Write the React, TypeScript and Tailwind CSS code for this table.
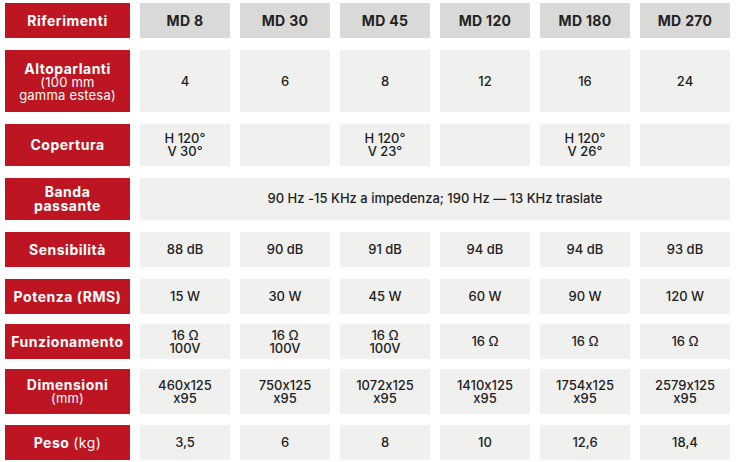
import React from "react";

const RED = "bg-[#bd1622]";

function Label({ children }: { children: React.ReactNode }) {
  return (
    <div className={`${RED} w-[125px] shrink-0 flex flex-col items-center justify-center text-white text-center font-bold text-[14px] leading-[14px] tracking-[0.5px]`}>
      {children}
    </div>
  );
}

function Cell({ children, header }: { children?: React.ReactNode; header?: boolean }) {
  return (
    <div
      className={`w-[90px] shrink-0 flex flex-col items-center justify-center text-center text-[#222] ${
        header ? "bg-[#d9d9d8] font-bold text-[14px] tracking-[0.3px]" : "bg-[#f0f0ef] font-medium text-[13px] leading-[13px]"
      }`}
    >
      {children}
    </div>
  );
}

function Row({ h, mt, children }: { h: string; mt: string; children: React.ReactNode }) {
  return <div className={`flex gap-[10px] ${h} ${mt}`}>{children}</div>;
}

const two = (a: string, b: string) => (
  <>
    <span>{a}</span>
    <span>{b}</span>
  </>
);

export default function App() {
  return (
    <div
      className="w-[740px] h-[462px] bg-white pl-[5px] pt-[3px] flex flex-col [font-feature-settings:'calt'_0]"
      style={{ fontFamily: "Inter, 'Liberation Sans', sans-serif" }}
    >
      <Row h="h-[35px]" mt="mt-0">
        <Label>Riferimenti</Label>
        {["MD 8", "MD 30", "MD 45", "MD 120", "MD 180", "MD 270"].map((t) => (
          <Cell key={t} header>
            {t}
          </Cell>
        ))}
      </Row>
      <Row h="h-[62px]" mt="mt-[12px]">
        <Label>
          <span className="leading-[15px]">Altoparlanti</span>
          <span className="font-normal text-[13px] leading-[13px] tracking-[0.2px]">(100 mm</span>
          <span className="font-normal text-[13px] leading-[13px] tracking-[0.2px]">gamma estesa)</span>
        </Label>
        {["4", "6", "8", "12", "16", "24"].map((t) => (
          <Cell key={t}>{t}</Cell>
        ))}
      </Row>
      <Row h="h-[42px]" mt="mt-[12px]">
        <Label>Copertura</Label>
        <Cell>{two("H 120°", "V 30°")}</Cell>
        <Cell />
        <Cell>{two("H 120°", "V 23°")}</Cell>
        <Cell />
        <Cell>{two("H 120°", "V 26°")}</Cell>
        <Cell />
      </Row>
      <Row h="h-[42px]" mt="mt-[12px]">
        <Label>
          <span>Banda</span>
          <span>passante</span>
        </Label>
        <div className="flex-1 mr-[10px] bg-[#f0f0ef] flex items-center justify-center text-[#222] font-medium text-[13px]">
          90 Hz -15 KHz a impedenza; 190 Hz — 13 KHz traslate
        </div>
      </Row>
      <Row h="h-[35px]" mt="mt-[12px]">
        <Label>Sensibilità</Label>
        {["88 dB", "90 dB", "91 dB", "94 dB", "94 dB", "93 dB"].map((t, i) => (
          <Cell key={i}>{t}</Cell>
        ))}
      </Row>
      <Row h="h-[35px]" mt="mt-[12px]">
        <Label>Potenza (RMS)</Label>
        {["15 W", "30 W", "45 W", "60 W", "90 W", "120 W"].map((t) => (
          <Cell key={t}>{t}</Cell>
        ))}
      </Row>
      <Row h="h-[35px]" mt="mt-[10px]">
        <Label>Funzionamento</Label>
        <Cell>{two("16 Ω", "100V")}</Cell>
        <Cell>{two("16 Ω", "100V")}</Cell>
        <Cell>{two("16 Ω", "100V")}</Cell>
        <Cell>16 Ω</Cell>
        <Cell>16 Ω</Cell>
        <Cell>16 Ω</Cell>
      </Row>
      <Row h="h-[45px]" mt="mt-[10px]">
        <Label>
          <span>Dimensioni</span>
          <span className="font-normal text-[13px] leading-[13px] tracking-[0.2px]">(mm)</span>
        </Label>
        {["460x125", "750x125", "1072x125", "1410x125", "1754x125", "2579x125"].map((t) => (
          <Cell key={t}>{two(t, "x95")}</Cell>
        ))}
      </Row>
      <Row h="h-[35px]" mt="mt-[11px]">
        <Label>
          <span>
            Peso <span className="font-normal">(kg)</span>
          </span>
        </Label>
        {["3,5", "6", "8", "10", "12,6", "18,4"].map((t) => (
          <Cell key={t}>{t}</Cell>
        ))}
      </Row>
    </div>
  );
}
